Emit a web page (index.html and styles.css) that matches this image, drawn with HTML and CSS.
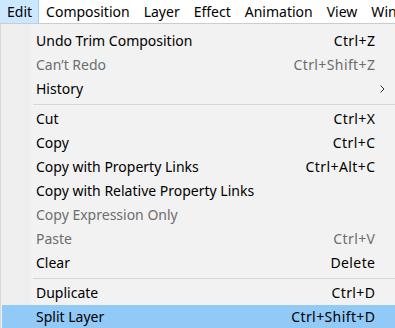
FILE: index.html
```html
<!DOCTYPE html>
<html>
<head>
<meta charset="utf-8">
<link rel="stylesheet" href="styles.css">
</head>
<body>
<div class="menubar">
  <div class="mb-item active">Edit</div>
  <div class="mb-item">Composition</div>
  <div class="mb-item">Layer</div>
  <div class="mb-item">Effect</div>
  <div class="mb-item">Animation</div>
  <div class="mb-item">View</div>
  <div class="mb-item">Window</div>
</div>
<div class="menu">
  <div class="row"><span class="label">Undo Trim Composition</span><span class="key">Ctrl+Z</span><span class="sub"></span></div>
  <div class="row disabled"><span class="label">Can’t Redo</span><span class="key">Ctrl+Shift+Z</span><span class="sub"></span></div>
  <div class="row"><span class="label">History</span><span class="key"></span><span class="sub"><svg width="5" height="8" viewBox="0 0 5 8"><path d="M0.5 0.5 L4 4 L0.5 7.5" fill="none" stroke="#333" stroke-width="1"/></svg></span></div>
  <div class="sep"></div>
  <div class="row"><span class="label">Cut</span><span class="key">Ctrl+X</span><span class="sub"></span></div>
  <div class="row"><span class="label">Copy</span><span class="key">Ctrl+C</span><span class="sub"></span></div>
  <div class="row"><span class="label">Copy with Property Links</span><span class="key">Ctrl+Alt+C</span><span class="sub"></span></div>
  <div class="row"><span class="label">Copy with Relative Property Links</span><span class="key"></span><span class="sub"></span></div>
  <div class="row disabled"><span class="label">Copy Expression Only</span><span class="key"></span><span class="sub"></span></div>
  <div class="row disabled"><span class="label">Paste</span><span class="key">Ctrl+V</span><span class="sub"></span></div>
  <div class="row"><span class="label">Clear</span><span class="key">Delete</span><span class="sub"></span></div>
  <div class="sep"></div>
  <div class="row"><span class="label">Duplicate</span><span class="key">Ctrl+D</span><span class="sub"></span></div>
  <div class="row hover"><span class="label">Split Layer</span><span class="key">Ctrl+Shift+D</span><span class="sub"></span></div>
</div>
</body>
</html>
```
FILE: styles.css
```css
html, body {
  margin: 0;
  padding: 0;
  background: #f2f2f2;
  overflow: hidden;
}
body {
  font-family: "Noto Sans", "Open Sans", sans-serif;
  font-size: 14px;
  color: #000;
  width: 395px;
  height: 328px;
}
.menubar {
  display: flex;
  height: 23px;
  background: #fff;
  white-space: nowrap;
  overflow: hidden;
}
.mb-item {
  flex: none;
  box-sizing: border-box;
  height: 23px;
  line-height: 23px;
  padding: 0 7px;
}
.mb-item.active {
  background: #cce8ff;
  border-right: 1px solid #99d1ff;
  padding-right: 6px;
}
.menu {
  box-sizing: border-box;
  width: 395px;
  height: 305px;
  overflow: hidden;
  border-top: 1px solid #cccccc;
  border-left: 1px solid #d9d9d9;
  padding: 5px 0 0 1px;
  background: linear-gradient(to right, #efefef 0, #efefef 30px, #f2f2f2 30px);
}
.row {
  display: grid;
  grid-template-columns: 34px 1fr auto 20px;
  height: 24px;
  line-height: 24px;
  white-space: nowrap;
}
.row .label {
  grid-column: 2;
}
.row .key {
  grid-column: 3;
  letter-spacing: 0.4px;
  margin-right: -0.4px;
  text-align: right;
}
.row .sub {
  grid-column: 4;
  display: flex;
  align-items: center;
  padding-left: 5px;
}
.row.disabled {
  color: #6d6d6d;
}
.row.hover {
  background: #91c9f7;
}
.sep {
  height: 6px;
  display: flex;
  align-items: center;
  padding-left: 31px;
}
.sep::before {
  content: "";
  display: block;
  height: 1px;
  flex: 1;
  background: #d7d7d7;
}
```
